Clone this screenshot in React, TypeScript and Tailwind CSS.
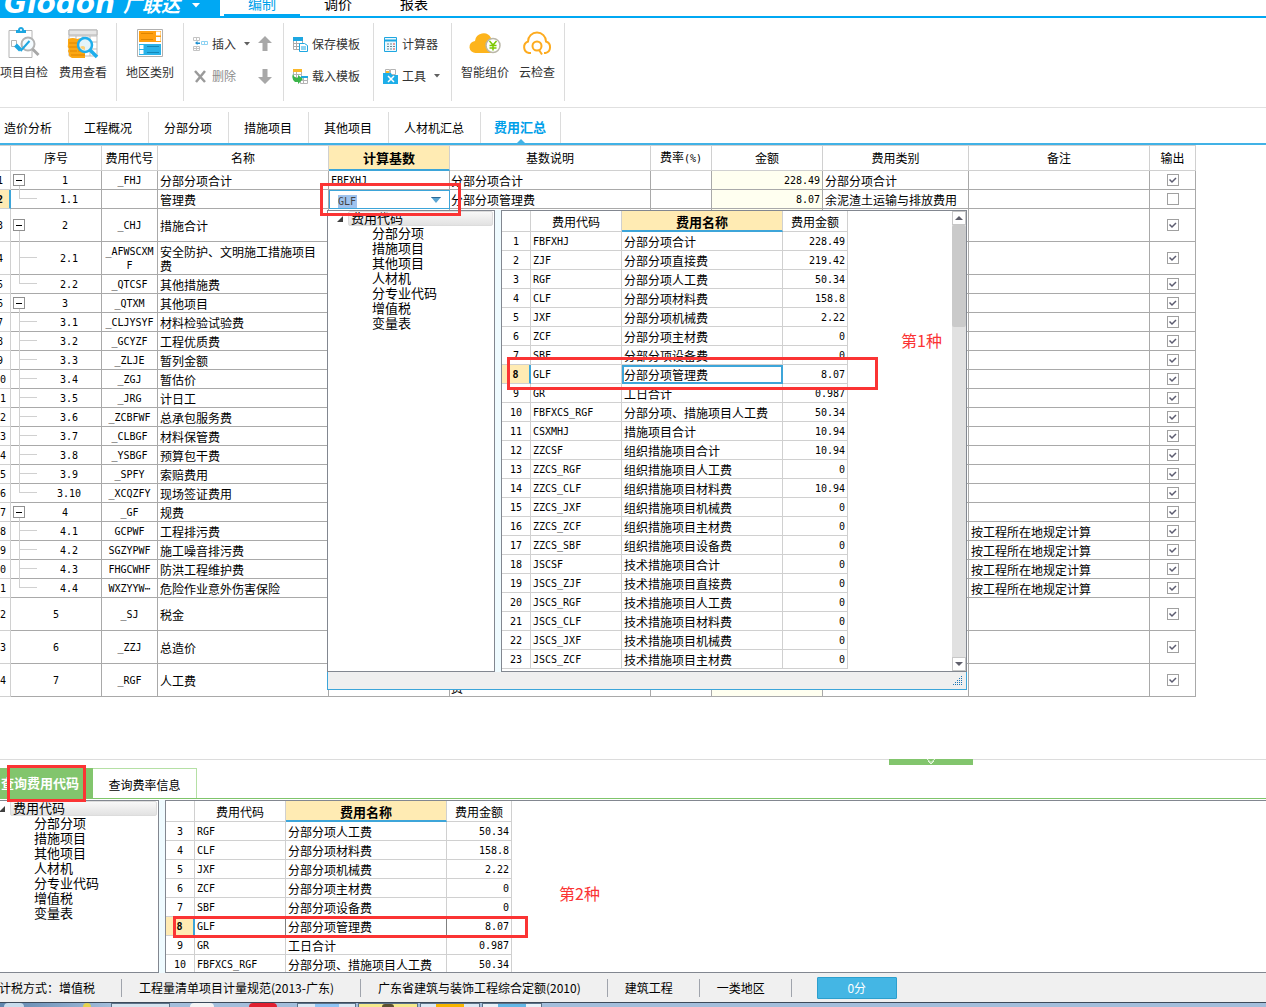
import React from "react";

type Row = {
  no: string;
  code: string;
  name: string;
  kind: "parent" | "child" | "last" | "leaf";
  tall?: boolean;
  base?: string;
  desc?: React.ReactNode;
  amount?: string;
  type?: string;
  note?: string;
  off?: boolean;
};

const RULE = "按工程所在地规定计算";

const rows: Row[] = [
  { no: "1", code: "_FHJ", name: "分部分项合计", kind: "parent", base: "FBFXHJ", desc: "分部分项合计", amount: "228.49", type: "分部分项合计" },
  { no: "1.1", code: "", name: "管理费", kind: "last", base: "GLF", desc: "分部分项管理费", amount: "8.07", type: "余泥渣土运输与排放费用", off: true },
  { no: "2", code: "_CHJ", name: "措施合计", kind: "parent", tall: true },
  { no: "2.1", code: "_AFWSCXMF", name: "安全防护、文明施工措施项目费", kind: "child", tall: true },
  { no: "2.2", code: "_QTCSF", name: "其他措施费", kind: "last" },
  { no: "3", code: "_QTXM", name: "其他项目", kind: "parent" },
  { no: "3.1", code: "_CLJYSYF", name: "材料检验试验费", kind: "child" },
  { no: "3.2", code: "_GCYZF", name: "工程优质费", kind: "child" },
  { no: "3.3", code: "_ZLJE", name: "暂列金额", kind: "child" },
  { no: "3.4", code: "_ZGJ", name: "暂估价", kind: "child" },
  { no: "3.5", code: "_JRG", name: "计日工", kind: "child" },
  { no: "3.6", code: "_ZCBFWF", name: "总承包服务费", kind: "child" },
  { no: "3.7", code: "_CLBGF", name: "材料保管费", kind: "child" },
  { no: "3.8", code: "_YSBGF", name: "预算包干费", kind: "child" },
  { no: "3.9", code: "_SPFY", name: "索赔费用", kind: "child" },
  { no: "3.10", code: "_XCQZFY", name: "现场签证费用", kind: "last" },
  { no: "4", code: "_GF", name: "规费", kind: "parent" },
  { no: "4.1", code: "GCPWF", name: "工程排污费", kind: "child", note: RULE },
  { no: "4.2", code: "SGZYPWF", name: "施工噪音排污费", kind: "child", note: RULE },
  { no: "4.3", code: "FHGCWHF", name: "防洪工程维护费", kind: "child", note: RULE },
  { no: "4.4", code: "WXZYYW⋯", name: "危险作业意外伤害保险", kind: "last", note: RULE },
  { no: "5", code: "_SJ", name: "税金", kind: "leaf", tall: true },
  { no: "6", code: "_ZZJ", name: "总造价", kind: "leaf", tall: true },
  { no: "7", code: "_RGF", name: "人工费", kind: "leaf", tall: true, desc: (<>分部分项人工费、措施项目人工<br />费</>) },
];

const codes: [string, string, string][] = [
  ["FBFXHJ", "分部分项合计", "228.49"],
  ["ZJF", "分部分项直接费", "219.42"],
  ["RGF", "分部分项人工费", "50.34"],
  ["CLF", "分部分项材料费", "158.8"],
  ["JXF", "分部分项机械费", "2.22"],
  ["ZCF", "分部分项主材费", "0"],
  ["SBF", "分部分项设备费", "0"],
  ["GLF", "分部分项管理费", "8.07"],
  ["GR", "工日合计", "0.987"],
  ["FBFXCS_RGF", "分部分项、措施项目人工费", "50.34"],
  ["CSXMHJ", "措施项目合计", "10.94"],
  ["ZZCSF", "组织措施项目合计", "10.94"],
  ["ZZCS_RGF", "组织措施项目人工费", "0"],
  ["ZZCS_CLF", "组织措施项目材料费", "10.94"],
  ["ZZCS_JXF", "组织措施项目机械费", "0"],
  ["ZZCS_ZCF", "组织措施项目主材费", "0"],
  ["ZZCS_SBF", "组织措施项目设备费", "0"],
  ["JSCSF", "技术措施项目合计", "0"],
  ["JSCS_ZJF", "技术措施项目直接费", "0"],
  ["JSCS_RGF", "技术措施项目人工费", "0"],
  ["JSCS_CLF", "技术措施项目材料费", "0"],
  ["JSCS_JXF", "技术措施项目机械费", "0"],
  ["JSCS_ZCF", "技术措施项目主材费", "0"],
];

const mono = "font-['DejaVu_Sans_Mono','Noto_Sans_CJK_SC',monospace] text-[10px]";

function RedBox({ className }: { className: string }) {
  return <div className={`pointer-events-none absolute z-30 border-3 border-[#fb3434] ${className}`} />;
}

function CodeTree() {
  return (
    <ul className="pr-px text-[13px] leading-[13px]">
      <li className="flex h-[15px] items-center">
        <svg className="ml-2 mr-1 shrink-0" width="8" height="8" viewBox="0 0 8 8"><path d="M7 1v6H1z" fill="#404040" /></svg>
        <span className="h-[15px] flex-1 rounded-[2px] border border-[#dcdcdc] bg-linear-to-b from-[#f8f8f8] to-[#e2e2e2] pl-0.5 leading-[11px]">费用代码</span>
      </li>
      {["分部分项", "措施项目", "其他项目", "人材机", "分专业代码", "增值税", "变量表"].map((t) => (
        <li key={t} className="h-[15px] pl-11">{t}</li>
      ))}
    </ul>
  );
}

function CodeGrid({ from, to, editing }: { from: number; to: number; editing: boolean }) {
  const head = "h-[21px] border-r border-b border-[#d0d0d0] p-0 pt-px font-normal";
  const cell = "h-[19px] border-r border-b border-[#d0d0d0] p-0 pt-0.5";
  return (
    <table className="w-[346px] table-fixed border-separate border-spacing-0 leading-[14px]">
      <colgroup>
        <col className="w-[29px]" />
        <col className="w-[91px]" />
        <col className="w-[161px]" />
        <col className="w-[65px]" />
      </colgroup>
      <thead>
        <tr>
          <th className={head} aria-label="序号" />
          <th className={head}>费用代码</th>
          <th className="h-[21px] border-r border-b-2 border-r-[#d0d0d0] border-b-[#3da5d9] bg-[#ffebb3] p-0 pt-0.5 text-[13px] font-bold">费用名称</th>
          <th className={head}>费用金额</th>
        </tr>
      </thead>
      <tbody>
        {codes.slice(from - 1, to).map(([code, name, amount], i) => {
          const n = from + i;
          const on = n === 8;
          return (
            <tr key={code}>
              <td className={on ? `h-[19px] border-r-2 border-b border-r-[#3da5d9] border-b-[#d0d0d0] bg-[#ffebb3] p-0 pt-0.5 text-center font-bold ${mono}` : `${cell} text-center ${mono}`}>{n}</td>
              <td className={`${cell} pl-0.5 ${mono} ${on && !editing ? "border-r-[#808080]" : ""}`}>{code}</td>
              <td className={`${cell} pl-0.5 ${on && editing ? "outline-2 -outline-offset-2 outline-[#3da5d9]" : ""} ${on && !editing ? "border-r-[#808080]" : ""}`}>{name}</td>
              <td className={`${cell} pr-0.5 text-right ${mono}`}>{amount}</td>
            </tr>
          );
        })}
      </tbody>
    </table>
  );
}

function ScrollBar() {
  return (
    <div className="flex w-[14px] shrink-0 flex-col bg-[#e1e1e1]">
      <button aria-label="向上滚动" className="flex h-[14px] items-center justify-center border border-[#c8c8c8] bg-white">
        <svg width="8" height="4" viewBox="0 0 8 4"><path d="M0 4L4 0L8 4z" fill="#60606c" /></svg>
      </button>
      <div className="h-[102px] rounded-[2px] bg-[#cacaca]" />
      <div className="flex-1" />
      <button aria-label="向下滚动" className="flex h-[14px] items-center justify-center border border-[#c8c8c8] bg-white">
        <svg width="8" height="4" viewBox="0 0 8 4"><path d="M0 0L4 4L8 0z" fill="#60606c" /></svg>
      </button>
    </div>
  );
}

function CodePopup() {
  return (
    <div className="absolute top-[65px] left-[327px] z-10 flex h-[480px] w-[640px] flex-col bg-white">
      <div className="flex min-h-0 flex-1 bg-[#effbff]">
        <div className="w-[168px] shrink-0 border border-[#828790] bg-white"><CodeTree /></div>
        <div className="ml-1.5 flex min-w-0 flex-1 border border-[#828790] bg-white">
          <div className="min-w-0 flex-1 overflow-hidden"><CodeGrid from={1} to={23} editing /></div>
          <ScrollBar />
        </div>
      </div>
      <div className="flex h-[18px] items-end justify-end border border-t-0 border-[#3da5d9] bg-[#efefef] pr-[3px] pb-[3px]">
        <svg width="10" height="10" viewBox="0 0 10 10" fill="#1c75b4" shapeRendering="crispEdges">
          <path d="M8 0h1v1h-1zM6 2h1v1h-1zM8 2h1v1h-1zM4 4h1v1h-1zM6 4h1v1h-1zM8 4h1v1h-1zM2 6h1v1h-1zM4 6h1v1h-1zM6 6h1v1h-1zM8 6h1v1h-1zM0 8h1v1h-1zM2 8h1v1h-1zM4 8h1v1h-1zM6 8h1v1h-1zM8 8h1v1h-1z" />
        </svg>
      </div>
    </div>
  );
}

function NoCell({ row }: { row: Row }) {
  if (row.kind === "leaf") return <div className={`pt-0.5 text-center ${mono}`}>{row.no}</div>;
  if (row.kind === "parent")
    return (
      <div className="flex h-full items-stretch">
        <div className="ml-0.5 flex w-3 flex-col items-center">
          <span className="flex-1" />
          <button aria-label="折叠" className="flex size-3 shrink-0 items-center justify-center border border-[#909090] bg-white">
            <span className="h-px w-1.5 bg-black" />
          </button>
          <span className="w-px flex-1 bg-[#d0d0d0]" />
        </div>
        <span className={`flex flex-1 items-center justify-center pt-0.5 pl-1 ${mono}`}>{row.no}</span>
      </div>
    );
  return (
    <div className="flex h-full items-stretch">
      <div className="ml-2 flex w-[18px] flex-col">
        <span className="-mt-px flex-1 border-b border-l border-[#d0d0d0]" />
        <span className={row.kind === "child" ? "flex-1 border-l border-[#d0d0d0]" : "flex-1"} />
      </div>
      <span className={`flex flex-1 items-center justify-center pt-0.5 ${mono}`}>{row.no}</span>
    </div>
  );
}

function FeeTable() {
  const th = "h-[26px] border-t border-r border-b border-[#d0d0d0] p-0 font-normal";
  const line = "border-r border-b border-[#a9a9a9] p-0";
  const td = `${line} pt-0.5`;
  return (
    <div className="relative w-max">
      <table className="w-[1196px] table-fixed border-separate border-spacing-0 leading-[14px]">
        <colgroup>
          <col className="w-[11px]" />
          <col className="w-[91px]" />
          <col className="w-[56px]" />
          <col className="w-[171px]" />
          <col className="w-[121px]" />
          <col className="w-[201px]" />
          <col className="w-[61px]" />
          <col className="w-[111px]" />
          <col className="w-[146px]" />
          <col className="w-[181px]" />
          <col className="w-[46px]" />
        </colgroup>
        <thead>
          <tr>
            <th className={th} aria-label="行号" />
            <th className={th}>序号</th>
            <th className={th}>费用代号</th>
            <th className={th}>名称</th>
            <th className="h-[26px] border-t border-r border-b-2 border-t-[#d0d0d0] border-r-[#d0d0d0] border-b-[#3da5d9] bg-[#ffebb3] p-0 text-[13px] font-bold">计算基数</th>
            <th className={th}>基数说明</th>
            <th className={th}>费率<span className={mono}>(%)</span></th>
            <th className={th}>金额</th>
            <th className={th}>费用类别</th>
            <th className={th}>备注</th>
            <th className={th}>输出</th>
          </tr>
        </thead>
        <tbody>
          {rows.map((r, i) => (
            <tr key={r.no} className={r.tall ? "h-[33px]" : "h-[19px]"}>
              <td className={i === 1 ? "overflow-hidden border-r-2 border-b border-r-[#3da5d9] border-b-[#d0d0d0] bg-[#ffebb3] p-0 pt-0.5 font-bold" : "overflow-hidden border-r border-b border-[#d0d0d0] p-0 pt-0.5"}>
                <div className={`-ml-2.5 w-5 text-center ${mono}`}>{i + 1}</div>
              </td>
              <td className={`h-px ${line}`}><NoCell row={r} /></td>
              <td className={`${td} px-[3px] text-center break-all ${mono}`}>{r.code}</td>
              <td className={`${td} px-0.5`}>{r.name}</td>
              {i === 1 ? (
                <td className="border border-[#3da5d9] p-0">
                  <div className="flex h-[17px] items-center pr-2 pl-2">
                    <input aria-label="计算基数" defaultValue="GLF" className={`mt-1 h-[13px] w-[19px] bg-[#9fc3ee] text-[#444] outline-none ${mono}`} />
                    <button aria-label="展开" className="ml-auto">
                      <svg width="10" height="6" viewBox="0 0 10 6"><path d="M0 0h10L5 6z" fill="#5aa5d2" /><path d="M0 0h10L9 1H1z" fill="#2c6a98" /></svg>
                    </button>
                  </div>
                </td>
              ) : (
                <td className={`${td} pl-0.5 ${mono}`}>{r.base}</td>
              )}
              <td className={`${td} pl-px`}>{r.desc}</td>
              <td className={td} />
              <td className={`${td} bg-[#fffff0] pr-0.5 text-right ${mono}`}>{r.amount}</td>
              <td className={`${td} pl-0.5 whitespace-nowrap`}>{r.type}</td>
              <td className={`${td} pl-0.5`}>{r.note}</td>
              <td className={line}>
                <label className="relative mx-auto -mt-px block size-3">
                  <input type="checkbox" aria-label={`输出 ${r.name}`} defaultChecked={!r.off} className="peer block size-3 appearance-none border border-[#a0a0a0] bg-white" />
                  <svg className="pointer-events-none absolute inset-0 hidden peer-checked:block" width="12" height="12" viewBox="0 0 12 12"><path d="M2.500 5.500L5 8L9 4" fill="none" stroke="#5c5c70" strokeWidth="1.500" /></svg>
                </label>
              </td>
            </tr>
          ))}
        </tbody>
      </table>
      <CodePopup />
      <RedBox className="top-[38px] left-[320px] h-[33px] w-[141px]" />
      <RedBox className="top-[212px] left-[507px] h-[33px] w-[371px]" />
      <span className="absolute top-[185px] left-[901px] z-20 text-base leading-5 text-[#fb3434]">第1种</span>
    </div>
  );
}

const Caret = ({ color }: { color: string }) => (
  <svg width="6" height="4" viewBox="0 0 6 4"><path d="M0 0h6L3 3.500z" fill={color} /></svg>
);

function BigTool({ label, children, className = "" }: { label: string; children: React.ReactNode; className?: string }) {
  return (
    <button className={`flex flex-col items-center self-start whitespace-nowrap pt-0.5 ${className}`}>
      <span className="flex h-9 items-center">{children}</span>
      <span className="mt-[3px] leading-4">{label}</span>
    </button>
  );
}

function SmallTool({ label, icon, caret, muted }: { label: string; icon: React.ReactNode; caret?: boolean; muted?: boolean }) {
  return (
    <button className={`flex h-8 items-center whitespace-nowrap ${muted ? "text-[#8c8c8c]" : ""}`}>
      <span className="mr-1 flex w-4 justify-center">{icon}</span>
      {label}
      {caret && <span className="ml-2"><Caret color="#606060" /></span>}
    </button>
  );
}

function TitleBar() {
  return (
    <header className="flex h-[18px] shrink-0 overflow-hidden border-b-2 border-[#00a8f3]">
      <div className="flex w-[220px] shrink-0 items-start bg-[#00a8f3] text-white">
        <span className="-mt-1 ml-1 w-[119px] font-['DejaVu_Sans',sans-serif] text-[28px] leading-4 font-bold italic">Glodon</span>
        <span className="-mt-1 w-[57px] text-[19px] leading-4 font-bold whitespace-nowrap italic">广联达</span>
        <span className="ml-3 pt-[3px]"><svg width="8" height="5" viewBox="0 0 8 5"><path d="M0 0h8L4 4.500z" fill="#fff" /></svg></span>
      </div>
      <nav className="flex text-sm leading-5">
        <a href="#edit" className="-mt-[7px] ml-1 flex h-[23px] w-[76px] justify-center border-b-2 border-[#00a8f3] text-[#00a0e9]">编制</a>
        <a href="#price" className="-mt-[7px] w-[76px] text-center">调价</a>
        <a href="#report" className="-mt-[7px] w-[76px] text-center">报表</a>
      </nav>
    </header>
  );
}

function Toolbar() {
  const group = "flex border-r border-[#dcdcdc]";
  return (
    <div className="flex h-[90px] shrink-0 border-b border-[#e0e0e0] pt-[5px] pb-1.5 text-[#333]">
      <div className={`${group} w-[117px] gap-[11px]`}>
        <BigTool label="项目自检">
          <svg width="32" height="34" viewBox="0 0 32 34" fill="none">
            <path d="M1 4.500h23v27H1z" stroke="#b4b4b4" />
            <path d="M8 7V4h2c0-4 6-4 6 0h2v3z" fill="#1ea7e1" />
            <circle cx="13" cy="4" r="1" fill="#fff" />
            <path d="M3.500 14.500h5v6h-5z" stroke="#b4b4b4" />
            <circle cx="20" cy="18" r="6.500" fill="#f4fbff" stroke="#b4b4b4" strokeWidth="2" />
            <path d="M24.500 23l6 6" stroke="#a8a8a8" strokeWidth="3" />
            <path d="M7.500 19l5 5" stroke="#1ea7e1" strokeWidth="4" />
            <path d="M12.500 25l9-10" stroke="#1ea7e1" strokeWidth="2" />
          </svg>
        </BigTool>
        <BigTool label="费用查看">
          <svg width="32" height="34" viewBox="0 0 32 34" fill="none">
            <path d="M2 4h28v26H2zM2 10h28M2 16h28M2 23h28M9 10v20M16 10v20M23 10v20" stroke="#bdbdbd" />
            <path d="M2 4h28v5H2z" fill="#e6e6e6" stroke="#b4b4b4" />
            <path d="M1 13q5-2 9 0q5-2 8 1v18H5q-4-2-3-5q-2-2 0-4q-2-2-1-5z" fill="#fba713" />
            <path d="M2 17h8M2 21h8M3 25h7M4 29h14M11 21h7M11 25h7" stroke="#de8500" />
            <circle cx="18" cy="19" r="7" fill="#e3f4fb" stroke="#1eaeec" strokeWidth="2.500" />
            <path d="M13 21q3-2 5 0v3q-3 0-5-3z" fill="#fbd17c" />
            <path d="M23 24l7 7" stroke="#1eaeec" strokeWidth="3.500" />
          </svg>
        </BigTool>
      </div>
      <div className={`${group} w-[67px] justify-center`}>
        <BigTool label="地区类别">
          <svg width="28" height="30" viewBox="0 0 28 30" fill="none">
            <path d="M1.500 1.500h25v27h-25z" fill="#fff" stroke="#b0b0b0" />
            <path d="M3 3h22v11H3z" fill="#ff9f0f" />
            <path d="M20 3.500h4.500v4H20zM20 9h4.500v4H20z" fill="#fff" />
            <path d="M5 5.500h12M5 11.500h12" stroke="#de8500" />
            <path d="M3 16h22v11H3z" fill="#29b2e8" />
            <path d="M3.500 17h4v4h-4zM3.500 22h4v4h-4z" fill="#fff" />
            <path d="M11 18.500h12M11 24.500h12" stroke="#1487b8" />
          </svg>
        </BigTool>
      </div>
      <div className={`${group} w-[100px] pt-[5px] pl-2`}>
        <div className="flex w-[66px] flex-col">
          <SmallTool label="插入" caret icon={
            <svg width="15" height="14" viewBox="0 0 15 14" fill="none"><path d="M.5.5h6v3h-6zM3.500.5v3M.5 9.500h6v4h-6zM3.500 9.500v4M.5 11.500h6" stroke="#c4c4c4" /><path d="M2 6l2.500-2v1.500H7v1.500H4.500V8z" fill="#1b8fd0" /><path d="M8.500 4.500h6v3h-6zM11.500 4.500v3" stroke="#8fd3f2" /></svg>
          } />
          <SmallTool label="删除" muted icon={
            <svg width="13" height="13" viewBox="0 0 13 13"><path d="M1 1l10 11M11 1L2 12" stroke="#9a9a9a" strokeWidth="2.500" /></svg>
          } />
        </div>
        <div className="flex flex-col">
          <button aria-label="上移" className="flex h-8 items-center"><svg width="14" height="16" viewBox="0 0 14 16"><path d="M7 0l7 7H9.500v8h-5V7H0z" fill="#a8a8a8" /></svg></button>
          <button aria-label="下移" className="flex h-8 items-center"><svg width="14" height="16" viewBox="0 0 14 16"><path d="M7 16l7-7H9.500V1h-5v8H0z" fill="#a8a8a8" /></svg></button>
        </div>
      </div>
      <div className={`${group} w-[90px] flex-col pt-[5px] pl-2`}>
        <SmallTool label="保存模板" icon={
          <svg width="15" height="15" viewBox="0 0 15 15" fill="none"><path d="M.5 1.500h9v11h-9zM.5 6.500h9M.5 9.500h9M3.500 3v10" stroke="#aaa" /><path d="M0 0h10v4H0z" fill="#1ea7e1" /><path d="M6.500 6.500h5l3 2v6h-8z" fill="#fff" stroke="#1ea7e1" /><path d="M8 10h5M8 12h5" stroke="#1ea7e1" /></svg>
        } />
        <SmallTool label="载入模板" icon={
          <svg width="16" height="15" viewBox="0 0 16 15" fill="none"><path d="M1.500 1.500h8v7h-8zM4.500 3v5M1.500 5.500h8M8.500 8.500h7v6h-7zM11.500 8v6M8 11.500h7" stroke="#b4b4b4" /><path d="M1 0h9v3H1z" fill="#fbb82b" /><path d="M9 7h7v2H9z" fill="#1ea7e1" /><path d="M1 5q-2 5 2 8h3v2l5-5-5-4v3Q2 9 1 5z" fill="#3bb54a" /></svg>
        } />
      </div>
      <div className={`${group} w-[78px] flex-col pt-[5px] pl-2`}>
        <SmallTool label="计算器" icon={
          <svg width="13" height="15" viewBox="0 0 13 15" fill="none"><path d="M.5.5h12v14H.5z" fill="#eaf8fe" stroke="#1ea7e1" /><path d="M1 3.500h11" stroke="#1ea7e1" strokeWidth="2" /><path d="M3 7h2M6 7h2M3 9.500h2M6 9.500h2M3 12h2M6 12h2" stroke="#6b8794" /><path d="M9 7h2M9 12h2" stroke="#e03c3c" /><path d="M9 9.500h2" stroke="#6b8794" /></svg>
        } />
        <SmallTool label="工具" caret icon={
          <svg width="15" height="15" viewBox="0 0 15 15" fill="none"><path d="M2.500.5h4v5h-4zM7.500.5h5v5h-5z" stroke="#b4b4b4" fill="#fff" /><path d="M3 2h3v3H3z" fill="#fbb82b" /><path d="M0 4h8l1 2h6v9H0z" fill="#1eaee8" /><path d="M5 7l6 6M11 7l-6 6" stroke="#fff" strokeWidth="1.500" /></svg>
        } />
      </div>
      <div className={`${group} w-[113px] gap-2.5 pl-[9px]`}>
        <BigTool label="智能组价">
          <svg width="32" height="26" viewBox="0 0 32 26" fill="none">
            <path d="M7 23a6 6 0 0 1-1-12a8.500 8.500 0 0 1 16-3q2 1 2 4v11z" fill="#fdb41c" />
            <circle cx="24" cy="15.500" r="7" fill="#fff" stroke="#bab7a8" strokeWidth="1.500" />
            <path d="M20.500 11l3.500 4 3.500-4M24 15v5.500M20.500 15.500h7M20.500 18h7" stroke="#7cc900" strokeWidth="1.500" />
          </svg>
        </BigTool>
        <BigTool label="云检查">
          <svg width="32" height="26" viewBox="0 0 32 26" fill="none" stroke="#fdab1f" strokeWidth="2">
            <path d="M10 23H8a6 6 0 0 1-1-11.500a9 9 0 0 1 18 0A6 6 0 0 1 24.500 23H23" />
            <circle cx="16" cy="16" r="4.500" />
            <path d="M18 20l3 4.500" />
          </svg>
        </BigTool>
      </div>
    </div>
  );
}

function PageTabs() {
  const tab = "mt-1 flex items-center border-r border-[#dcdcdc]";
  return (
    <nav className="flex h-[37px] shrink-0 border-b-2 border-[#41b2e6]">
      <a href="#t0" className={`${tab} pr-4 pl-1`}>造价分析</a>
      {["工程概况", "分部分项", "措施项目", "其他项目", "人材机汇总"].map((t) => (
        <a key={t} href={`#${t}`} className={`${tab} pr-4 pl-[15px]`}>{t}</a>
      ))}
      <a href="#sum" aria-current="page" className="relative mt-1 flex items-center border-r border-[#dcdcdc] pr-3.5 pb-0.5 pl-[13px] text-[13px] font-bold text-[#00a0e9]">
        费用汇总
        <svg className="absolute bottom-0 left-1/2 -translate-x-1/2" width="8" height="4" viewBox="0 0 8 4"><path d="M0 4L4 0L8 4z" fill="#41b2e6" /></svg>
      </a>
    </nav>
  );
}

function QueryPanel() {
  return (
    <section className="relative shrink-0 border-t border-[#dcdcdc] pt-2">
      <button aria-label="收起" className="absolute -top-px left-[889px] flex h-1.5 w-[84px] justify-center bg-[#82c56d]">
        <svg width="10" height="6" viewBox="0 0 10 6" fill="none"><path d="M1 0l4 3.500L9 0M2 2l3 3 3-3" stroke="#e6f6e0" /></svg>
      </button>
      <div role="tablist" className="flex h-[31px] border-b border-[#7fc56b]">
        <button role="tab" aria-selected="true" className="w-[93px] bg-[#82c56d] pl-px text-left text-[13px] font-bold text-white">查询费用代码</button>
        <button role="tab" aria-selected="false" className="w-[104px] border-t border-r border-[#b5e0a5] pt-0.5">查询费率信息</button>
      </div>
      <div className="mt-px flex h-[173px] overflow-hidden bg-[#effbff]">
        <div className="w-[159px] shrink-0 overflow-hidden border border-l-0 border-[#828790] bg-white">
          <div className="-ml-2.5"><CodeTree /></div>
        </div>
        <div className="ml-1.5 min-w-0 flex-1 overflow-hidden border border-r-0 border-[#828790] bg-white">
          <CodeGrid from={3} to={10} editing={false} />
        </div>
      </div>
      <RedBox className="top-[5px] left-[7px] h-[37px] w-[79px]" />
      <RedBox className="top-[156px] left-[173px] h-[22px] w-[355px]" />
      <span className="absolute top-[123px] left-[559px] text-base leading-5 text-[#fb3434]">第2种</span>
    </section>
  );
}

function StatusBar() {
  const item = "flex h-[18px] items-center border-r border-[#a0a4ac] pr-[26px] whitespace-nowrap";
  return (
    <footer className="flex h-[29px] shrink-0 items-center gap-[17px] bg-[#f0f0f0]">
      <span className={`${item} -ml-px`}>计税方式：增值税</span>
      <span className={item}>工程量清单项目计量规范(2013-广东)</span>
      <span className={item}>广东省建筑与装饰工程综合定额(2010)</span>
      <span className={item}>建筑工程</span>
      <span className={item}>一类地区</span>
      <button className="ml-2 h-[22px] w-20 rounded-[1px] border border-[#2c9fcd] bg-[#44b6e4] text-white">0分</button>
    </footer>
  );
}

function TaskBar() {
  return (
    <div className="flex h-[5px] shrink-0 items-stretch border-t border-[#3c4a5a] bg-[#a3bedb]">
      <div className="flex w-[111px] justify-between bg-linear-to-r from-[#5f86ae] to-[#a3bedb] pr-5 pl-1">
        <span className="w-5 rounded-t-full bg-[#c8dcec]" />
        <span className="w-2 rounded-t-full bg-[#e5d34c]" />
      </div>
      <div className="w-[59px] border-x border-t border-[#5c7288] bg-[#d6e4ef]" />
      <div className="flex w-[127px] justify-between pr-5 pl-5">
        <span className="w-6 rounded-t-full bg-[#f4f4f4]" />
        <span className="w-7 rounded-t-full bg-[#e02030]" />
      </div>
      <div className="flex w-[59px] justify-center border-x border-t border-[#5c7288] bg-[#dce9f4]"><span className="w-6 bg-[#8fc4f4]" /></div>
      <div className="ml-0.5 flex w-[60px] justify-center border-x border-t border-[#5c7288] bg-[#f5e98c]"><span className="w-3 rounded-t-full bg-[#5b5030]" /></div>
      <div className="ml-0.5 flex w-[60px] justify-center border-x border-t border-[#5c7288] bg-[#dce9f4]"><span className="w-7 bg-[#f7b500]" /></div>
      <div className="ml-0.5 flex w-[60px] justify-center border-x border-t border-[#5c7288] bg-[#e8f1f8]"><span className="w-7 bg-[#63b7e6]" /></div>
    </div>
  );
}

export default function App() {
  return (
    <div className="flex h-screen flex-col overflow-hidden bg-white font-['Noto_Sans_CJK_SC',sans-serif] text-xs text-black">
      <TitleBar />
      <Toolbar />
      <PageTabs />
      <main className="min-h-0 flex-1 overflow-hidden">
        <FeeTable />
      </main>
      <QueryPanel />
      <StatusBar />
      <TaskBar />
    </div>
  );
}
